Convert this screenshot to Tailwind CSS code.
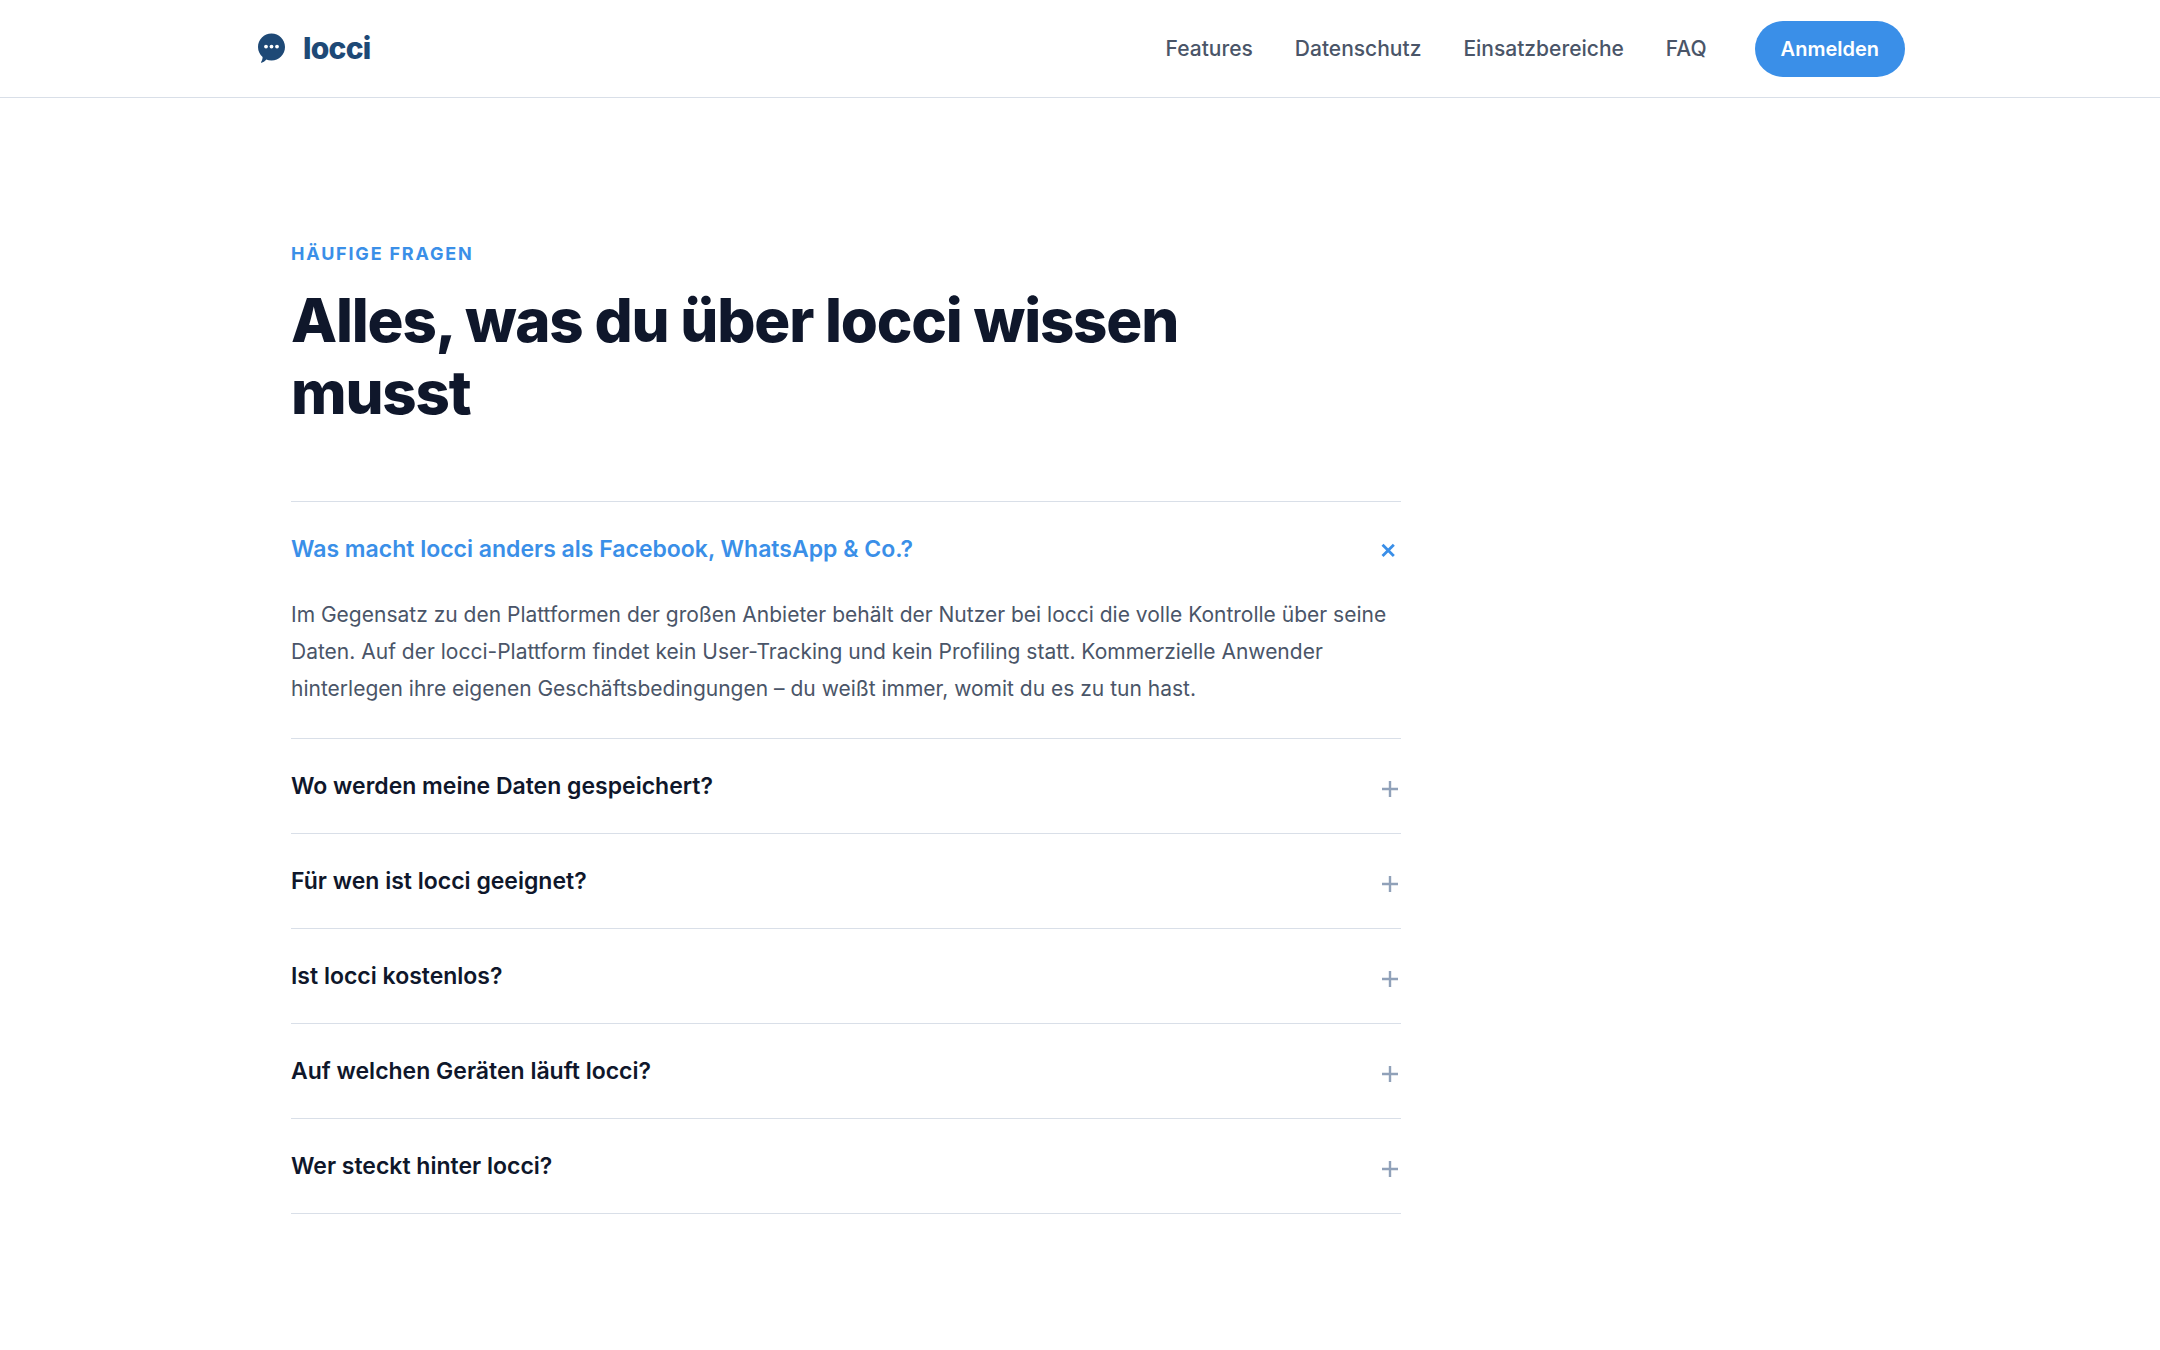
<!DOCTYPE html>
<html lang="de">
<head>
    <meta charset="UTF-8">
    <meta name="viewport" content="width=device-width, initial-scale=1.0">
    <title>locci – Häufige Fragen</title>
    <script src="https://cdn.jsdelivr.net/npm/@tailwindcss/browser@4"></script>
</head>
<body class="bg-white font-['Inter',sans-serif] text-slate-900 antialiased">

    <header class="border-b border-[#d9dfe8]">
        <div class="max-w-[1650px] mx-auto h-[97px] flex items-center justify-between">
            <a href="#" class="flex items-center gap-4 pb-0.5 text-[30px] leading-9 font-extrabold tracking-tight text-[#1e4976]">
                <svg class="w-8 h-8" viewBox="0 0 32 32" aria-hidden="true">
                    <path fill="currentColor" d="M16.500 1.500C24 1.500 30 7.500 30 15s-6 13.500-13.500 13.500c-1.900 0-3.600-.3-5.200-1C9.800 29.300 8 30.400 6.600 30.800c-.5.1-.8-.3-.5-.7 1-1.600 1.500-3.400 1.500-5C4.800 22.600 3 19 3 15 3 7.500 9 1.500 16.500 1.500z"/>
                    <circle cx="11" cy="14.600" r="1.900" fill="#fff"/>
                    <circle cx="16.500" cy="14.600" r="1.900" fill="#fff"/>
                    <circle cx="22" cy="14.600" r="1.900" fill="#fff"/>
                </svg>
                <span>locci</span>
            </a>

            <nav class="flex items-center gap-12">
                <div class="flex items-center gap-[42px] text-[21px] leading-8 font-medium text-[#4a5568]">
                    <a href="#features" class="hover:text-slate-900">Features</a>
                    <a href="#datenschutz" class="hover:text-slate-900">Datenschutz</a>
                    <a href="#einsatzbereiche" class="hover:text-slate-900">Einsatzbereiche</a>
                    <a href="#faq" class="hover:text-slate-900">FAQ</a>
                </div>
                <button type="button" class="rounded-full bg-[#3a8fe8] px-[26px] py-3 text-[20px] leading-8 font-semibold text-white hover:bg-[#2f7fd4]">Anmelden</button>
            </nav>
        </div>
    </header>

    <main id="faq" class="max-w-[1650px] mx-auto px-9 pt-36 pb-36">
        <p class="text-[18px] leading-6 font-bold tracking-widest uppercase text-[#3a8fe8]">Häufige Fragen</p>
        <h1 class="mt-[18px] max-w-[960px] text-[60px] leading-[72px] font-extrabold tracking-[-0.02em]">Alles, was du über locci wissen musst</h1>

        <div class="mt-[73px] max-w-[1110px] border-t border-[#d9dfe8]">
            <details open class="group border-b border-[#d9dfe8]">
                <summary class="flex items-center justify-between h-[94px] cursor-pointer list-none text-[23px] leading-8 font-semibold group-open:text-[#3a8fe8]">
                    Was macht locci anders als Facebook, WhatsApp &amp; Co.?
                    <svg class="w-5 h-5 overflow-visible text-slate-400 group-open:text-[#3a8fe8] group-open:rotate-45" viewBox="0 0 20 20" fill="none" stroke="currentColor" stroke-width="2.800" aria-hidden="true"><path d="M1 13h16M9 5v16"/></svg>
                </summary>
                <p class="pb-[31px] text-[21px] leading-[37px] text-[#4a5568]">Im Gegensatz zu den Plattformen der großen Anbieter behält der Nutzer bei locci die volle Kontrolle über seine Daten. Auf der locci-Plattform findet kein User-Tracking und kein Profiling statt. Kommerzielle Anwender hinterlegen ihre eigenen Geschäftsbedingungen – du weißt immer, womit du es zu tun hast.</p>
            </details>

            <details class="group border-b border-[#d9dfe8]">
                <summary class="flex items-center justify-between h-[94px] cursor-pointer list-none text-[23px] leading-8 font-semibold group-open:text-[#3a8fe8]">
                    Wo werden meine Daten gespeichert?
                    <svg class="w-5 h-5 overflow-visible text-slate-400 group-open:text-[#3a8fe8] group-open:rotate-45" viewBox="0 0 20 20" fill="none" stroke="currentColor" stroke-width="2.400" aria-hidden="true"><path d="M1 13h16M9 5v16"/></svg>
                </summary>
            </details>

            <details class="group border-b border-[#d9dfe8]">
                <summary class="flex items-center justify-between h-[94px] cursor-pointer list-none text-[23px] leading-8 font-semibold group-open:text-[#3a8fe8]">
                    Für wen ist locci geeignet?
                    <svg class="w-5 h-5 overflow-visible text-slate-400 group-open:text-[#3a8fe8] group-open:rotate-45" viewBox="0 0 20 20" fill="none" stroke="currentColor" stroke-width="2.400" aria-hidden="true"><path d="M1 13h16M9 5v16"/></svg>
                </summary>
            </details>

            <details class="group border-b border-[#d9dfe8]">
                <summary class="flex items-center justify-between h-[94px] cursor-pointer list-none text-[23px] leading-8 font-semibold group-open:text-[#3a8fe8]">
                    Ist locci kostenlos?
                    <svg class="w-5 h-5 overflow-visible text-slate-400 group-open:text-[#3a8fe8] group-open:rotate-45" viewBox="0 0 20 20" fill="none" stroke="currentColor" stroke-width="2.400" aria-hidden="true"><path d="M1 13h16M9 5v16"/></svg>
                </summary>
            </details>

            <details class="group border-b border-[#d9dfe8]">
                <summary class="flex items-center justify-between h-[94px] cursor-pointer list-none text-[23px] leading-8 font-semibold group-open:text-[#3a8fe8]">
                    Auf welchen Geräten läuft locci?
                    <svg class="w-5 h-5 overflow-visible text-slate-400 group-open:text-[#3a8fe8] group-open:rotate-45" viewBox="0 0 20 20" fill="none" stroke="currentColor" stroke-width="2.400" aria-hidden="true"><path d="M1 13h16M9 5v16"/></svg>
                </summary>
            </details>

            <details class="group border-b border-[#d9dfe8]">
                <summary class="flex items-center justify-between h-[94px] cursor-pointer list-none text-[23px] leading-8 font-semibold group-open:text-[#3a8fe8]">
                    Wer steckt hinter locci?
                    <svg class="w-5 h-5 overflow-visible text-slate-400 group-open:text-[#3a8fe8] group-open:rotate-45" viewBox="0 0 20 20" fill="none" stroke="currentColor" stroke-width="2.400" aria-hidden="true"><path d="M1 13h16M9 5v16"/></svg>
                </summary>
            </details>
        </div>
    </main>

</body>
</html>
